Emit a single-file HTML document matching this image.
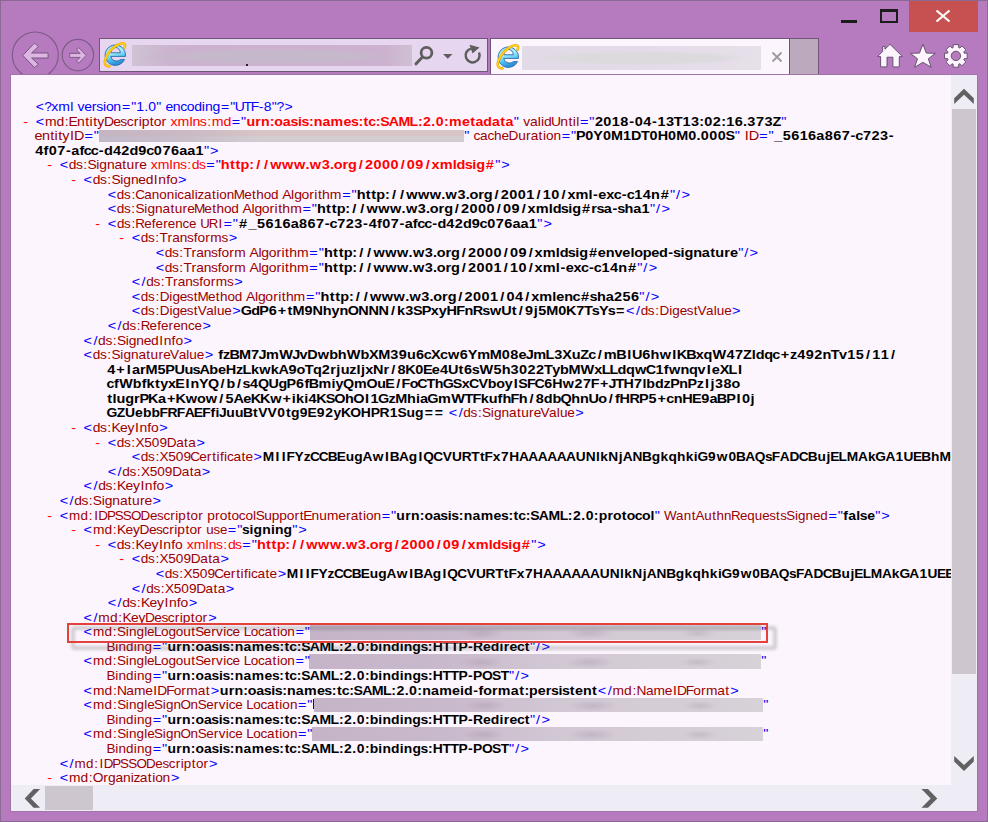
<!DOCTYPE html>
<html><head><meta charset="utf-8">
<style>
html,body{margin:0;padding:0}
body{width:988px;height:822px;position:relative;overflow:hidden;background:#b57bbe;font-family:"Liberation Sans",sans-serif}
.abs{position:absolute}
#win{position:absolute;left:0;top:0;width:986px;height:820px;border:1px solid #8a6a92}
#content{position:absolute;left:11px;top:75px;width:966px;height:736px;background:#fcf5fd;overflow:hidden}
#txt{position:absolute;left:-11px;top:-75px;width:988px;height:822px}
#txt span{position:absolute;white-space:pre;font-family:"Liberation Sans",sans-serif;font-size:12.6px;line-height:15px;font-kerning:none;transform-origin:0 0}
.blur{position:absolute;background:#d8d0d8}
</style></head><body>
<div id="win"></div>
<!-- title buttons -->
<div class="abs" style="left:841px;top:20px;width:16px;height:3px;background:#1c1c1c"></div>
<div class="abs" style="left:880px;top:9px;width:14px;height:9px;border:2px solid #1c1c1c;border-top-width:3px"></div>
<div class="abs" style="left:909px;top:1px;width:69px;height:31px;background:#c75050"></div>
<svg class="abs" style="left:909px;top:1px" width="69" height="31" viewBox="0 0 69 31"><path d="M27.5 9.5 L40.5 20.5 M40.5 9.5 L27.5 20.5" stroke="#fff" stroke-width="2.2" fill="none"/></svg>
<!-- nav buttons -->
<svg class="abs" style="left:0;top:0" width="100" height="75" viewBox="0 0 100 75">
 <circle cx="35.3" cy="55" r="23" fill="none" stroke="#7d5a87" stroke-width="1.1"/>
 <path d="M22.8 55.4 L34.5 43.1 L38.4 46.5 L31.6 53 L48.1 53 L48.1 58 L31.6 58 L38.4 64.3 L34.5 67.6 Z" fill="#ddb6e3" stroke="#6e4f79" stroke-width="0.9" stroke-linejoin="miter"/>
 <circle cx="77.9" cy="55.1" r="15.7" fill="none" stroke="#7d5a87" stroke-width="1.1"/>
 <path d="M86.1 55.4 L78.7 47.7 L76.7 49.9 L80.2 53.4 L69.7 53.4 L69.7 57.4 L80.2 57.4 L76.7 60.9 L78.7 63.2 Z" fill="#ddb6e3" stroke="#6e4f79" stroke-width="0.8"/>
</svg>
<!-- address bar -->
<div class="abs" style="left:99px;top:38px;width:387px;height:32px;border:1px solid #6f5578;background:#e7d6ef"></div>
<div class="blur" style="left:132px;top:45px;width:280px;height:21px;background:radial-gradient(ellipse 48% 42% at 50% 55%,#c6b8cb 60%,rgba(200,180,205,0) 100%),linear-gradient(90deg,#cfc3d3 0%,#cbb2cf 15%,#cdb0d0 50%,#cdb1d0 90%,#cfc0d3 100%)"></div>
<div class="abs" style="left:246px;top:64px;width:2px;height:2px;background:#222"></div>
<svg class="abs" style="left:410px;top:40px" width="80" height="30" viewBox="410 40 80 30">
 <circle cx="426.5" cy="52.8" r="5.4" fill="none" stroke="#5e5e5e" stroke-width="2.8"/>
 <path d="M422.5 57 L416 63.8" stroke="#5e5e5e" stroke-width="3" stroke-linecap="round"/>
 <path d="M443 54 L452.5 54 L447.75 58.8 Z" fill="#5e5e5e"/>
 <path d="M479 52.5 A7 7 0 1 1 471 48.6" fill="none" stroke="#5e5e5e" stroke-width="2.5"/>
 <path d="M469.5 44.8 L479.5 47.6 L472.5 53.5 Z" fill="#5e5e5e"/>
</svg>
<!-- tab -->
<div class="abs" style="left:490px;top:38px;width:298px;height:35px;border:1px solid #6f5578;border-bottom:none;background:#fcf5fd"></div>
<div class="blur" style="left:522px;top:46px;width:239px;height:24px;background:radial-gradient(ellipse 45% 30% at 50% 50%,#dcdadd 70%,rgba(220,218,221,0) 100%),linear-gradient(90deg,#e2dae6,#e4dbe8 50%,#e6e0ea)"></div>
<svg class="abs" style="left:770px;top:50px" width="14" height="14" viewBox="0 0 14 14"><path d="M2.5 2.5 L11.5 11.5 M11.5 2.5 L2.5 11.5" stroke="#9a9a9a" stroke-width="1.8"/></svg>
<div class="abs" style="left:789px;top:38px;width:28px;height:35px;border:1px solid #6f5578;border-bottom:none;background:#bca9bd"></div>
<!-- IE icons -->
<svg class="abs" style="left:100px;top:40px" width="30" height="30" viewBox="100 40 30 30">
 <defs>
  <linearGradient id="ieg" x1="0" y1="0" x2="0.3" y2="1"><stop offset="0" stop-color="#8fe3fb"/><stop offset="0.45" stop-color="#a9effd"/><stop offset="0.75" stop-color="#4cc3ef"/><stop offset="1" stop-color="#2c8fd6"/></linearGradient>
  
 </defs>
 
   <path d="M125.43 56.4 L110.7 56.4 Q111.3 60.6 115.9 61.1 Q118.4 61.3 120.6 59.6 L124.5 59.6 A10.2 10.2 0 1 1 125.43 56.4 Z M110.9 52.8 A4.7 5.3 0 0 1 120.3 52.8 Z" fill="url(#ieg)" fill-rule="evenodd" stroke="#2a66ad" stroke-width="0.9"/>
   <path d="M109.5 66.3 C105.5 66.8, 103.8 63.5, 105.3 59.5 C107 54.5, 111.5 48.5, 117 45.2 C120.5 43.2, 124 42.5, 124.8 44.2 C125.3 45.2, 125 46.5, 124.6 47.6" fill="none" stroke="#eaa300" stroke-width="2.6" stroke-linecap="round"/>
   <path d="M109.5 66.3 C105.5 66.8, 103.8 63.5, 105.3 59.5 C107 54.5, 111.5 48.5, 117 45.2 C120.5 43.2, 124 42.5, 124.8 44.2 C125.3 45.2, 125 46.5, 124.6 47.6" fill="none" stroke="#ffd51c" stroke-width="1.4" stroke-linecap="round"/>
  
</svg>
<svg class="abs" style="left:493px;top:42px" width="30" height="30" viewBox="100 40 30 30">
 
   <path d="M125.43 56.4 L110.7 56.4 Q111.3 60.6 115.9 61.1 Q118.4 61.3 120.6 59.6 L124.5 59.6 A10.2 10.2 0 1 1 125.43 56.4 Z M110.9 52.8 A4.7 5.3 0 0 1 120.3 52.8 Z" fill="url(#ieg)" fill-rule="evenodd" stroke="#2a66ad" stroke-width="0.9"/>
   <path d="M109.5 66.3 C105.5 66.8, 103.8 63.5, 105.3 59.5 C107 54.5, 111.5 48.5, 117 45.2 C120.5 43.2, 124 42.5, 124.8 44.2 C125.3 45.2, 125 46.5, 124.6 47.6" fill="none" stroke="#eaa300" stroke-width="2.6" stroke-linecap="round"/>
   <path d="M109.5 66.3 C105.5 66.8, 103.8 63.5, 105.3 59.5 C107 54.5, 111.5 48.5, 117 45.2 C120.5 43.2, 124 42.5, 124.8 44.2 C125.3 45.2, 125 46.5, 124.6 47.6" fill="none" stroke="#ffd51c" stroke-width="1.4" stroke-linecap="round"/>
  
</svg>
<!-- right toolbar icons -->
<svg class="abs" style="left:870px;top:40px" width="110" height="32" viewBox="870 40 110 32">
 <path d="M890 44.3 L902.4 56.6 L899.3 56.6 L899.3 66.9 L892.9 66.9 L892.9 57.2 L887 57.2 L887 66.9 L880.6 66.9 L880.6 56.6 L877.5 56.6 L882.6 51.5 L882.6 46.4 L884.9 46.4 L884.9 49.3 Z" fill="#fcf5fd" stroke="#5e4868" stroke-width="0.9"/>
 <path d="M922.9 44.2 L926.3 53.1 L935.4 53.3 L928.3 58.8 L931.2 67.3 L922.9 62.3 L914.6 67.3 L917.5 58.8 L910.4 53.3 L919.5 53.1 Z" fill="#fcf5fd" stroke="#5e4868" stroke-width="0.9"/>
 <g transform="translate(955.9,55.9)"><path d="M8.04 -3.33 L8.25 -2.75 L11.27 -2.75 L11.27 2.75 L8.25 2.75 L8.04 3.33 L7.78 3.89 L9.91 6.02 L6.02 9.91 L3.89 7.78 L3.33 8.04 L2.75 8.25 L2.75 11.27 L-2.75 11.27 L-2.75 8.25 L-3.33 8.04 L-3.89 7.78 L-6.02 9.91 L-9.91 6.02 L-7.78 3.89 L-8.04 3.33 L-8.25 2.75 L-11.27 2.75 L-11.27 -2.75 L-8.25 -2.75 L-8.04 -3.33 L-7.78 -3.89 L-9.91 -6.02 L-6.02 -9.91 L-3.89 -7.78 L-3.33 -8.04 L-2.75 -8.25 L-2.75 -11.27 L2.75 -11.27 L2.75 -8.25 L3.33 -8.04 L3.89 -7.78 L6.02 -9.91 L9.91 -6.02 L7.78 -3.89 Z M4.70 0 A4.7 4.7 0 1 0 -4.70 0 A4.7 4.7 0 1 0 4.70 0 Z" fill-rule="evenodd" fill="#fcf5fd" stroke="#5e4868" stroke-width="0.9"/></g>
</svg>
<!-- content -->
<div class="abs" style="left:10px;top:74px;width:968px;height:738px;background:#a272aa"></div>
<div id="content"><div id="txt">
<div class="blur" style="left:99px;top:130px;width:365px;height:12px;background:linear-gradient(90deg,rgba(175,160,190,.45) 0%,rgba(180,165,190,.35) 25%,rgba(200,195,200,0) 45%),linear-gradient(180deg,#d8c6c9 0%,#d7c4c6 45%,#d4cdd2 60%,#d2ccd1 100%)"></div>
<div class="blur" style="left:310px;top:625px;width:451px;height:15px;background:radial-gradient(ellipse 22px 6px at 38% 55%,rgba(150,130,150,.28),transparent),radial-gradient(ellipse 25px 6px at 62% 55%,rgba(150,130,155,.28),transparent),radial-gradient(ellipse 18px 5px at 86% 55%,rgba(150,130,150,.25),transparent),linear-gradient(90deg,#c5b4c8 0%,#c9b9cc 30%,#d2c8d4 55%,#d7d1d8 100%)"></div>
<div class="blur" style="left:309px;top:654px;width:452px;height:15px;background:radial-gradient(ellipse 22px 6px at 38% 55%,rgba(150,130,150,.28),transparent),radial-gradient(ellipse 25px 6px at 62% 55%,rgba(150,130,155,.28),transparent),radial-gradient(ellipse 18px 5px at 86% 55%,rgba(150,130,150,.25),transparent),linear-gradient(90deg,#c5b4c8 0%,#c9b9cc 30%,#d2c8d4 55%,#d7d1d8 100%)"></div>
<div class="blur" style="left:314px;top:698px;width:449px;height:14px;background:radial-gradient(ellipse 22px 6px at 38% 55%,rgba(150,130,150,.28),transparent),radial-gradient(ellipse 25px 6px at 62% 55%,rgba(150,130,155,.28),transparent),radial-gradient(ellipse 18px 5px at 86% 55%,rgba(150,130,150,.25),transparent),linear-gradient(90deg,#c5b4c8 0%,#c9b9cc 30%,#d2c8d4 55%,#d7d1d8 100%)"></div>
<div class="blur" style="left:312px;top:727px;width:451px;height:14px;background:radial-gradient(ellipse 22px 6px at 38% 55%,rgba(150,130,150,.28),transparent),radial-gradient(ellipse 25px 6px at 62% 55%,rgba(150,130,155,.28),transparent),radial-gradient(ellipse 18px 5px at 86% 55%,rgba(150,130,150,.25),transparent),linear-gradient(90deg,#c5b4c8 0%,#c9b9cc 30%,#d2c8d4 55%,#d7d1d8 100%)"></div>
<div class="abs" style="left:313px;top:699px;width:1px;height:10px;background:#1a1a1a"></div>
<svg class="abs" style="left:0;top:0" width="988" height="822" viewBox="0 0 988 822" font-family="Liberation Sans" font-size="12.6" text-anchor="middle">
<text x="36.0 43.3 49.4 57.8 64.6 73.0 79.3 84.8 89.9 94.2 98.9 105.6 113.5 120.4 126.3 131.7 137.1 143.0 152.5 159.2 165.5 171.7 178.4 183.2 188.1 194.9 202.8 209.7 216.1 223.3 229.7 235.3 241.2 247.1 252.5 259.9" y="111" fill="#0000ff" transform="scale(1.1101,1)">&lt;?xmlversion=&quot;1.0&quot;encoding=&quot;UTF-8&quot;?&gt;</text>
<text x="22.4" y="126" fill="#ff0000" transform="scale(1.1500,1)">-</text>
<text x="34.7" y="126" fill="#0000ff" transform="scale(1.1500,1)">&lt;</text>
<text x="45.8 54.5 60.3 66.2 73.1 78.7 82.3 85.9 91.1 98.5 105.9 111.9 117.6 122.9 126.7 131.5 137.1 142.5 148.1" y="126" fill="#990000" transform="scale(1.1068,1)">md:EntityDescriptor</text>
<text x="154.6 162.9 169.6 174.4 180.5 185.7 193.3 201.9" y="126" fill="#ff0000" transform="scale(1.1261,1)">xmlns:md</text>
<text x="205.2 211.9" y="126" fill="#0000ff" transform="scale(1.1500,1)">=&quot;</text>
<text x="222.7 229.2 235.6 241.7 247.5 254.7 261.4 266.3 271.2 276.4 282.4 289.9 299.2 308.6 315.1 320.4 325.0 330.6 335.8 341.8 349.8 359.1 367.6 373.2 379.2 384.8 390.4 396.3 404.3 413.7 419.6 425.7 433.0 440.4 446.4 452.5" y="126" fill="#ff0000" font-weight="bold" transform="scale(1.1261,1)">urn:oasis:names:tc:SAML:2.0:metadata</text>
<text x="449.0" y="126" fill="#0000ff" transform="scale(1.1500,1)">&quot;</text>
<text x="477.4 483.9 488.7 491.7 496.6 504.0 511.4 517.0 520.6 523.6" y="126" fill="#990000" transform="scale(1.1033,1)">validUntil</text>
<text x="508.0 514.7" y="126" fill="#0000ff" transform="scale(1.1500,1)">=&quot;</text>
<text x="520.8 528.1 535.5 542.9 549.2 555.4 562.8 569.0 575.3 582.7 589.8 597.0 604.4 610.2 616.0 623.4 629.2 635.0 642.4 647.9 653.4 660.8 668.2 675.5" y="126" fill="#000000" font-weight="bold" transform="scale(1.1500,1)">2018-04-13T13:02:16.373Z</text>
<text x="681.5" y="126" fill="#0000ff" transform="scale(1.1500,1)">&quot;</text>
<text x="33.8 40.3 45.7 49.2 52.7 57.8 63.1 69.3" y="140" fill="#990000" transform="scale(1.1411,1)">entityID</text>
<text x="77.1 83.7" y="140" fill="#0000ff" transform="scale(1.1500,1)">=&quot;</text>
<text x="405.9" y="140" fill="#0000ff" transform="scale(1.1500,1)">&quot;</text>
<text x="441.5 447.9 454.3 460.8 467.7 475.3 483.1 489.0 494.7 500.3 504.0 508.9 515.8" y="140" fill="#990000" transform="scale(1.0804,1)">cacheDuration</text>
<text x="492.1 498.8" y="140" fill="#0000ff" transform="scale(1.1500,1)">=&quot;</text>
<text x="508.7 516.2 523.9 531.6 540.4 549.2 557.3 565.2 572.4 580.6 588.7 597.5 606.3 611.8 617.3 624.8 632.2 639.7" y="140" fill="#000000" font-weight="bold" transform="scale(1.1417,1)">P0Y0M1DT0H0M0.000S</text>
<text x="641.2" y="140" fill="#0000ff" transform="scale(1.1500,1)">&quot;</text>
<text x="649.4 655.7" y="140" fill="#990000" transform="scale(1.1500,1)">ID</text>
<text x="663.9 670.6" y="140" fill="#0000ff" transform="scale(1.1500,1)">=&quot;</text>
<text x="676.7 684.1 691.5 698.9 706.2 713.4 720.6 728.0 735.4 741.7 747.3 754.0 761.4 768.8 775.0" y="140" fill="#000000" font-weight="bold" transform="scale(1.1500,1)">_5616a867-c723-</text>
<text x="34.1 40.0 45.8 53.2 59.5 65.5 71.2 76.4 82.4 88.0 94.3 101.7 109.0 116.4 123.8 130.6 137.3 144.7 152.1 159.3 166.3 173.5" y="155" fill="#000000" font-weight="bold" transform="scale(1.1500,1)">4f07-afcc-d42d9c076aa1</text>
<text x="179.6 186.2" y="155" fill="#0000ff" transform="scale(1.1500,1)">&quot;&gt;</text>
<text x="43.2" y="169" fill="#ff0000" transform="scale(1.1500,1)">-</text>
<text x="55.6" y="169" fill="#0000ff" transform="scale(1.1500,1)">&lt;</text>
<text x="66.0 72.3 77.6 83.8 89.0 93.9 100.8 107.6 113.1 118.7 124.5 130.1" y="169" fill="#990000" transform="scale(1.0991,1)">ds:Signature</text>
<text x="138.8 147.1 153.9 158.8 165.0 170.2 176.1 182.2" y="169" fill="#ff0000" transform="scale(1.1117,1)">xmlns:ds</text>
<text x="183.1 189.8" y="169" fill="#0000ff" transform="scale(1.1500,1)">=&quot;</text>
<text x="195.9 202.1 206.9 213.0 218.9 224.5 231.4 240.0 250.2 260.5 267.4 274.3 283.2 288.7 294.1 300.2 306.5 313.7 320.8 328.2 335.6 343.0 350.2 357.3 364.7 371.9 378.8 387.9 395.4 400.9 407.6 412.4 417.9 426.0" y="169" fill="#ff0000" font-weight="bold" transform="scale(1.1500,1)">http://www.w3.org/2000/09/xmldsig#</text>
<text x="432.8 439.5" y="169" fill="#0000ff" transform="scale(1.1500,1)">&quot;&gt;</text>
<text x="64.1" y="184" fill="#ff0000" transform="scale(1.1500,1)">-</text>
<text x="76.4" y="184" fill="#0000ff" transform="scale(1.1500,1)">&lt;</text>
<text x="88.0 94.2 99.5 105.8 111.0 115.9 122.8 129.5 136.2 141.9 147.7 153.1 158.3" y="184" fill="#990000" transform="scale(1.0977,1)">ds:SignedInfo</text>
<text x="158.5" y="184" fill="#0000ff" transform="scale(1.1500,1)">&gt;</text>
<text x="97.3" y="199" fill="#0000ff" transform="scale(1.1500,1)">&lt;</text>
<text x="112.7 119.1 124.6 131.0 138.4 145.4 152.3 159.3 164.4 168.9 175.4 180.4 183.4 187.8 194.2 199.8 203.5 208.4 215.4 223.7 231.7 237.3 243.0 250.0 256.9" y="199" fill="#990000" transform="scale(1.0699,1)">ds:CanonicalizationMethod</text>
<text x="258.7 263.9 268.8 275.4 281.0 284.8 288.4 293.9 302.7" y="199" fill="#990000" transform="scale(1.1090,1)">Algorithm</text>
<text x="301.2 307.9" y="199" fill="#0000ff" transform="scale(1.1500,1)">=&quot;</text>
<text x="314.0 320.2 325.0 331.1 337.0 342.6 349.5 358.1 368.3 378.6 385.5 392.4 401.3 406.8 412.2 418.3 424.6 431.8 438.9 446.3 453.7 461.1 468.3 475.4 482.8 490.0 496.9 506.0 513.5 517.8 523.8 530.7 537.2 542.8 548.4 555.1 562.5 569.9 578.1" y="199" fill="#000000" font-weight="bold" transform="scale(1.1500,1)">http://www.w3.org/2001/10/xml-exc-c14n#</text>
<text x="584.9 589.7 596.3" y="199" fill="#0000ff" transform="scale(1.1500,1)">&quot;/&gt;</text>
<text x="97.3" y="213" fill="#0000ff" transform="scale(1.1500,1)">&lt;</text>
<text x="111.3 117.7 123.0 129.3 134.6 139.6 146.6 153.5 159.1 164.8 170.7 176.3 184.3 192.2 197.7 203.4 210.3 217.1" y="213" fill="#990000" transform="scale(1.0831,1)">ds:SignatureMethod</text>
<text x="222.9 228.1 233.0 239.6 245.2 249.0 252.6 258.1 266.9" y="213" fill="#990000" transform="scale(1.1090,1)">Algorithm</text>
<text x="266.7 273.4" y="213" fill="#0000ff" transform="scale(1.1500,1)">=&quot;</text>
<text x="279.5 285.7 290.5 296.6 302.4 308.0 315.0 323.6 333.8 344.1 351.0 357.9 366.7 372.2 377.6 383.8 390.1 397.3 404.4 411.8 419.2 426.6 433.7 440.9 448.3 455.4 462.3 471.5 479.0 484.5 491.2 496.0 501.5 509.6 516.5 522.1 528.6 534.7 540.2 547.0 554.2 561.4" y="213" fill="#000000" font-weight="bold" transform="scale(1.1500,1)">http://www.w3.org/2000/09/xmldsig#rsa-sha1</text>
<text x="567.5 572.3 578.9" y="213" fill="#0000ff" transform="scale(1.1500,1)">&quot;/&gt;</text>
<text x="85.0" y="228" fill="#ff0000" transform="scale(1.1500,1)">-</text>
<text x="97.3" y="228" fill="#0000ff" transform="scale(1.1500,1)">&lt;</text>
<text x="113.6 120.0 125.5 132.0 139.3 144.6 150.0 155.8 161.5 168.5 175.1 181.6" y="228" fill="#990000" transform="scale(1.0618,1)">ds:Reference</text>
<text x="195.4 203.6 210.0" y="228" fill="#990000" transform="scale(1.0489,1)">URI</text>
<text x="198.0 204.7" y="228" fill="#0000ff" transform="scale(1.1500,1)">=&quot;</text>
<text x="211.4 219.5 226.9 234.3 241.7 249.1 256.3 263.5 270.9 278.3 284.5 290.1 296.8 304.2 311.6 317.8 324.1 329.9 335.8 343.2 349.4 355.5 361.1 366.3 372.4 378.0 384.2 391.6 399.0 406.4 413.8 420.5 427.3 434.6 442.0 449.2 456.2 463.4" y="228" fill="#000000" font-weight="bold" transform="scale(1.1500,1)">#_5616a867-c723-4f07-afcc-d42d9c076aa1</text>
<text x="469.5 476.2" y="228" fill="#0000ff" transform="scale(1.1500,1)">&quot;&gt;</text>
<text x="105.8" y="242" fill="#ff0000" transform="scale(1.1500,1)">-</text>
<text x="118.2" y="242" fill="#0000ff" transform="scale(1.1500,1)">&lt;</text>
<text x="133.4 139.7 145.1 151.0 156.7 162.5 169.4 175.7 180.5 185.8 191.5 199.3 207.6" y="242" fill="#990000" transform="scale(1.0837,1)">ds:Transforms</text>
<text x="202.6" y="242" fill="#0000ff" transform="scale(1.1500,1)">&gt;</text>
<text x="139.1" y="257" fill="#0000ff" transform="scale(1.1500,1)">&lt;</text>
<text x="154.4 160.6 166.0 171.8 177.5 183.2 190.0 196.4 201.1 206.4 212.0 219.7" y="257" fill="#990000" transform="scale(1.0921,1)">ds:Transform</text>
<text x="229.2 234.4 239.2 245.9 251.5 255.2 258.8 264.4 273.1" y="257" fill="#990000" transform="scale(1.1090,1)">Algorithm</text>
<text x="272.7 279.4" y="257" fill="#0000ff" transform="scale(1.1500,1)">=&quot;</text>
<text x="285.6 291.7 296.6 302.7 308.5 314.1 321.0 329.6 339.8 350.1 357.0 364.0 372.8 378.3 383.7 389.8 396.1 403.3 410.4 417.8 425.2 432.6 439.8 446.9 454.3 461.5 468.4 477.5 485.0 490.5 497.2 502.0 507.5 515.6 523.4 530.7 537.9 544.7 550.0 555.4 562.7 569.8 577.0 583.2 588.8 593.6 599.1 606.6 613.8 619.7 625.9 632.3 638.3" y="257" fill="#000000" font-weight="bold" transform="scale(1.1500,1)">http://www.w3.org/2000/09/xmldsig#enveloped-signature</text>
<text x="644.1 648.9 655.5" y="257" fill="#0000ff" transform="scale(1.1500,1)">&quot;/&gt;</text>
<text x="139.1" y="272" fill="#0000ff" transform="scale(1.1500,1)">&lt;</text>
<text x="154.4 160.6 166.0 171.8 177.5 183.2 190.0 196.4 201.1 206.4 212.0 219.7" y="272" fill="#990000" transform="scale(1.0921,1)">ds:Transform</text>
<text x="229.2 234.4 239.2 245.9 251.5 255.2 258.8 264.4 273.1" y="272" fill="#990000" transform="scale(1.1090,1)">Algorithm</text>
<text x="272.7 279.4" y="272" fill="#0000ff" transform="scale(1.1500,1)">=&quot;</text>
<text x="285.6 291.7 296.6 302.7 308.5 314.1 321.0 329.6 339.8 350.1 357.0 364.0 372.8 378.3 383.7 389.8 396.1 403.3 410.4 417.8 425.2 432.6 439.8 446.9 454.3 461.5 468.4 477.5 485.0 489.4 495.4 502.2 508.7 514.3 519.9 526.6 534.0 541.5 549.6" y="272" fill="#000000" font-weight="bold" transform="scale(1.1500,1)">http://www.w3.org/2001/10/xml-exc-c14n#</text>
<text x="556.4 561.2 567.8" y="272" fill="#0000ff" transform="scale(1.1500,1)">&quot;/&gt;</text>
<text x="118.2 124.8" y="286" fill="#0000ff" transform="scale(1.1500,1)">&lt;/</text>
<text x="138.4 144.8 150.1 156.0 161.7 167.5 174.4 180.8 185.6 190.9 196.6 204.3 212.6" y="286" fill="#990000" transform="scale(1.0837,1)">ds:Transforms</text>
<text x="207.3" y="286" fill="#0000ff" transform="scale(1.1500,1)">&gt;</text>
<text x="118.2" y="301" fill="#0000ff" transform="scale(1.1500,1)">&lt;</text>
<text x="134.5 140.9 146.3 153.1 158.9 163.9 170.8 177.0 182.0 188.9 197.0 202.5 208.2 215.1 222.0" y="301" fill="#990000" transform="scale(1.0750,1)">ds:DigestMethod</text>
<text x="226.1 231.3 236.1 242.8 248.4 252.2 255.8 261.3 270.0" y="301" fill="#990000" transform="scale(1.1090,1)">Algorithm</text>
<text x="269.8 276.4" y="301" fill="#0000ff" transform="scale(1.1500,1)">=&quot;</text>
<text x="282.6 288.8 293.6 299.7 305.5 311.1 318.0 326.6 336.9 347.1 354.1 361.0 369.8 375.3 380.7 386.9 393.2 400.3 407.5 414.9 422.3 429.6 436.8 444.0 451.3 458.5 465.4 474.5 482.0 487.3 494.5 501.3 508.7 516.1 522.9 530.2 537.4 544.8 552.1" y="301" fill="#000000" font-weight="bold" transform="scale(1.1500,1)">http://www.w3.org/2001/04/xmlenc#sha256</text>
<text x="558.2 563.0 569.6" y="301" fill="#0000ff" transform="scale(1.1500,1)">&quot;/&gt;</text>
<text x="118.2" y="315" fill="#0000ff" transform="scale(1.1500,1)">&lt;</text>
<text x="134.8 141.2 146.7 153.5 159.4 164.4 171.2 177.4 182.5 188.6 195.8 200.8 205.8 212.7" y="315" fill="#990000" transform="scale(1.0722,1)">ds:DigestValue</text>
<text x="205.7" y="315" fill="#0000ff" transform="scale(1.1500,1)">&gt;</text>
<text x="214.7 222.7 230.2 237.7 245.8 252.7 260.1 268.8 277.0 285.2 292.4 299.6 307.9 316.8 325.6 334.5 342.4 349.4 356.7 364.1 371.7 378.9 385.8 393.7 401.5 408.6 416.6 423.8 431.9 441.3 448.0 453.9 461.1 466.8 472.6 481.3 490.0 497.8 505.6 512.8 519.3 526.2 533.2 540.6" y="315" fill="#000000" font-weight="bold" transform="scale(1.1475,1)">GdP6+tM9NhynONNN/k3SPxyHFnRswUt/9j5M0K7TsYs=</text>
<text x="548.1 554.7" y="315" fill="#0000ff" transform="scale(1.1500,1)">&lt;/</text>
<text x="601.0 607.4 612.9 619.7 625.5 630.6 637.4 643.6 648.7 654.7 662.0 667.0 672.0 678.9" y="315" fill="#990000" transform="scale(1.0722,1)">ds:DigestValue</text>
<text x="640.3" y="315" fill="#0000ff" transform="scale(1.1500,1)">&gt;</text>
<text x="97.3 104.0" y="330" fill="#0000ff" transform="scale(1.1500,1)">&lt;/</text>
<text x="118.7 125.2 130.6 137.1 144.4 149.8 155.1 160.9 166.7 173.6 180.3 186.7" y="330" fill="#990000" transform="scale(1.0618,1)">ds:Reference</text>
<text x="179.8" y="330" fill="#0000ff" transform="scale(1.1500,1)">&gt;</text>
<text x="76.4 83.1" y="345" fill="#0000ff" transform="scale(1.1500,1)">&lt;/</text>
<text x="92.9 99.2 104.5 110.7 115.9 120.8 127.7 134.5 141.1 146.9 152.6 158.0 163.3" y="345" fill="#990000" transform="scale(1.0977,1)">ds:SignedInfo</text>
<text x="163.2" y="345" fill="#0000ff" transform="scale(1.1500,1)">&gt;</text>
<text x="76.4" y="359" fill="#0000ff" transform="scale(1.1500,1)">&lt;</text>
<text x="89.3 95.6 101.0 107.3 112.6 117.6 124.6 131.5 137.1 142.8 148.7 154.4 161.5 168.7 173.6 178.6 185.4" y="359" fill="#990000" transform="scale(1.0814,1)">ds:SignatureValue</text>
<text x="181.8" y="359" fill="#0000ff" transform="scale(1.1500,1)">&gt;</text>
<text x="191.9 197.1 204.1 213.1 221.8 228.3 236.9 248.7 257.7 264.0 271.8 281.3 290.1 297.6 307.5 317.3 325.1 334.2 342.9 350.3 357.8 365.3 372.0 379.1 386.2 394.4 403.2 410.9 420.5 431.2 439.9 447.3 454.4 460.7 469.3 478.3 485.4 493.2 501.1 508.4 515.1 521.6 530.7 540.4 547.1 554.1 562.1 569.6 578.5 586.3 593.1 601.2 608.6 615.7 625.5 635.3 642.7 650.0 655.4 661.0 668.4 675.1 682.5 690.0 696.8 704.1 711.5 719.0 726.2 733.1 740.2 747.6 754.8 762.0 769.3 776.5" y="359" fill="#000000" font-weight="bold" transform="scale(1.1500,1)">fzBM7JmWJvDwbhWbXM39u6cXcw6YmM08eJmL3XuZc/mBIU6hwIKBxqW47Zldqc+z492nTv15/11/</text>
<text x="96.7 104.8 111.9 118.2 124.3 131.8 140.5 148.0 156.2 164.2 171.0 178.1 185.9 193.0 200.9 208.3 214.7 221.7 230.3 239.0 246.7 254.4 261.7 268.8 276.0 283.3 289.6 294.2 300.1 306.9 311.8 315.6 321.1 328.9 335.9 342.0 349.1 356.9 364.7 372.0 379.0 386.2 394.2 400.9 407.0 413.7 422.8 432.6 440.1 447.5 454.9 462.3 469.7 476.8 483.7 490.9 499.6 510.7 520.3 527.1 533.8 540.8 548.2 557.1 566.0 573.5 579.3 586.6 595.5 603.0 610.1 616.3 622.4 630.0 637.4 643.5" y="374" fill="#000000" font-weight="bold" transform="scale(1.1500,1)">4+IarM5PUusAbeHzLkwkA9oTq2rjuzljxNr/8K0Ee4Ut6sW5h3022TybMWxLLdqwC1fwnqvIeXLI</text>
<text x="97.4 102.7 111.1 121.0 127.0 132.7 138.8 144.7 151.7 158.8 165.2 171.8 179.6 188.2 196.2 203.5 210.7 217.3 224.0 232.3 241.2 249.3 256.9 264.5 270.5 276.7 286.5 294.1 299.4 307.4 317.7 328.0 336.4 343.9 351.0 357.9 365.0 372.5 379.8 387.2 395.3 403.4 410.7 418.0 426.0 433.9 441.3 448.5 454.7 461.2 468.4 475.7 483.3 491.5 501.1 510.1 517.6 524.7 532.6 540.0 546.4 554.3 562.5 568.1 573.7 581.2 588.1 595.0 602.7 610.4 617.4 623.3 628.1 633.9 641.4 648.8" y="388" fill="#000000" font-weight="bold" transform="scale(1.1343,1)">cfWbfktyxEInYQ/b/s4QUgP6fBmiyQmOuE/FoCThGSxCVboyISFC6Hw27F+JTH7lbdzPnPzIj38o</text>
<text x="95.5 99.7 105.3 112.8 119.1 125.5 133.4 140.9 148.9 157.3 166.6 175.3 184.0 192.6 199.8 207.6 215.1 222.6 230.8 240.0 249.5 255.7 261.1 266.5 272.0 279.7 287.6 295.8 304.0 312.2 319.4 325.8 333.8 341.1 349.2 358.0 363.6 368.9 376.7 386.6 398.5 408.0 414.9 421.8 429.1 435.0 441.0 448.1 455.2 462.5 469.6 477.0 484.5 492.6 500.9 508.4 516.5 524.4 531.4 537.1 543.6 552.2 560.2 567.7 575.8 583.2 590.1 598.2 606.2 613.6 620.8 628.2 636.0 642.6 649.0 654.7" y="403" fill="#000000" font-weight="bold" transform="scale(1.1494,1)">tlugrPKa+Kwow/5AeKKw+iki4KSOhOI1GzMhiaGmWTFkufhFh/8dbQhnUo/fHRP5+cnHE9aBPI0j</text>
<text x="101.3 109.5 117.8 125.8 133.3 141.0 148.3 156.2 164.0 171.8 179.8 187.1 192.8 197.0 201.8 208.7 216.6 224.6 231.3 238.1 246.6 254.7 261.1 267.4 275.1 282.7 290.3 298.0 305.5 313.3 322.2 331.4 340.0 348.3 356.5 364.2 372.0 379.8 388.3 397.4" y="417" fill="#000000" font-weight="bold" transform="scale(1.1041,1)">GZUebbFRFAEFfiJuuBtVV0tg9E92yKOHPR1Sug==</text>
<text x="393.9 400.6" y="417" fill="#0000ff" transform="scale(1.1500,1)">&lt;/</text>
<text x="431.9 438.3 443.7 450.0 455.3 460.3 467.3 474.2 479.8 485.5 491.4 497.0 504.1 511.3 516.2 521.3 528.1" y="417" fill="#990000" transform="scale(1.0814,1)">ds:SignatureValue</text>
<text x="504.0" y="417" fill="#0000ff" transform="scale(1.1500,1)">&gt;</text>
<text x="64.1" y="432" fill="#ff0000" transform="scale(1.1500,1)">-</text>
<text x="76.4" y="432" fill="#0000ff" transform="scale(1.1500,1)">&lt;</text>
<text x="87.4 93.6 98.9 105.2 112.2 118.5 124.0 129.7 135.1 140.3" y="432" fill="#990000" transform="scale(1.1046,1)">ds:KeyInfo</text>
<text x="142.2" y="432" fill="#0000ff" transform="scale(1.1500,1)">&gt;</text>
<text x="85.0" y="447" fill="#ff0000" transform="scale(1.1500,1)">-</text>
<text x="97.3" y="447" fill="#0000ff" transform="scale(1.1500,1)">&lt;</text>
<text x="111.2 117.6 122.9 129.2 136.5 143.6 150.6 158.4 166.1 171.6 177.2" y="447" fill="#990000" transform="scale(1.0840,1)">ds:X509Data</text>
<text x="174.5" y="447" fill="#0000ff" transform="scale(1.1500,1)">&gt;</text>
<text x="118.2" y="461" fill="#0000ff" transform="scale(1.1500,1)">&lt;</text>
<text x="132.7 139.0 144.4 150.6 157.9 164.9 171.9 179.3 186.4 192.0 196.5 200.2 203.6 207.1 211.5 217.9 223.4 228.9" y="461" fill="#990000" transform="scale(1.0894,1)">ds:X509Certificate</text>
<text x="224.2" y="461" fill="#0000ff" transform="scale(1.1500,1)">&gt;</text>
<text x="246.6 254.7 260.5 266.9 274.6 282.0 289.2 297.3 305.5 313.5 321.3 329.2 337.4 347.2 355.4 362.5 371.0 379.3 386.0 393.6 402.4 410.7 419.6 428.5 436.6 442.8 448.8 456.0 463.6 472.1 481.1 489.7 498.4 507.0 515.7 524.4 533.2 542.4 549.0 554.7 563.1 569.9 576.4 585.4 594.2 602.3 610.0 617.7 625.6 633.3 638.9 645.3 653.7 663.1 672.4 680.5 689.0 698.0 705.9 712.6 720.5 729.5 738.1 746.3 754.5 760.6 766.6 773.9 782.8 792.4 800.5 808.7 817.6 825.8 834.2 842.6 850.6 858.7 868.0 877.3 885.7 894.3 903.9 912.8" y="461" fill="#000000" font-weight="bold" transform="scale(1.0890,1)">MIIFYzCCBEugAwIBAgIQCVURTtFx7HAAAAAAUNlkNjANBgkqhkiG9w0BAQsFADCBujELMAkGA1UEBhMCVVMx</text>
<text x="97.3 104.0" y="476" fill="#0000ff" transform="scale(1.1500,1)">&lt;/</text>
<text x="116.3 122.6 128.0 134.3 141.6 148.6 155.6 163.4 171.1 176.7 182.2" y="476" fill="#990000" transform="scale(1.0840,1)">ds:X509Data</text>
<text x="179.2" y="476" fill="#0000ff" transform="scale(1.1500,1)">&gt;</text>
<text x="76.4 83.1" y="490" fill="#0000ff" transform="scale(1.1500,1)">&lt;/</text>
<text x="92.4 98.6 103.8 110.1 117.1 123.5 128.9 134.6 140.0 145.2" y="490" fill="#990000" transform="scale(1.1046,1)">ds:KeyInfo</text>
<text x="146.9" y="490" fill="#0000ff" transform="scale(1.1500,1)">&gt;</text>
<text x="55.6 62.2" y="505" fill="#0000ff" transform="scale(1.1500,1)">&lt;/</text>
<text x="71.0 77.2 82.5 88.7 94.0 98.9 105.7 112.6 118.1 123.7 129.5 135.0" y="505" fill="#990000" transform="scale(1.0991,1)">ds:Signature</text>
<text x="136.4" y="505" fill="#0000ff" transform="scale(1.1500,1)">&gt;</text>
<text x="43.2" y="520" fill="#ff0000" transform="scale(1.1500,1)">-</text>
<text x="55.6" y="520" fill="#0000ff" transform="scale(1.1500,1)">&lt;</text>
<text x="70.1 79.2 85.2 90.2 96.9 104.6 111.9 119.6 127.9 136.6 144.3 150.6 156.6 162.0 165.9 171.0 176.8 182.4 188.2" y="520" fill="#990000" transform="scale(1.0648,1)">md:IDPSSODescriptor</text>
<text x="194.1 199.9 205.6 211.1 216.6 222.9 229.3 234.1 239.4 246.6 253.6 260.5 267.3 273.0 277.5 283.2 290.2 297.2 306.1 314.8 320.4 326.1 331.7 335.4 340.2 347.1" y="520" fill="#990000" transform="scale(1.0869,1)">protocolSupportEnumeration</text>
<text x="335.6 342.3" y="520" fill="#0000ff" transform="scale(1.1500,1)">=&quot;</text>
<text x="360.4 367.0 373.6 379.7 385.6 392.9 399.6 404.6 409.5 414.8 420.9 428.5 438.0 447.4 454.1 459.4 464.1 469.7 475.0 481.1 489.2 498.6 507.3 512.9 518.9 524.6 530.3 536.3 542.4 548.9 555.2 561.4 567.7 574.5 581.4 587.0" y="520" fill="#000000" font-weight="bold" transform="scale(1.1117,1)">urn:oasis:names:tc:SAML:2.0:protocol</text>
<text x="571.6" y="520" fill="#0000ff" transform="scale(1.1500,1)">&quot;</text>
<text x="632.4 641.4 648.5 654.3 660.4 667.9 673.7 679.5 686.7 694.3 701.6 708.5 715.6 722.6 728.9 734.0 739.2 746.0 751.4 756.5 763.6 770.6 777.5" y="520" fill="#990000" transform="scale(1.0599,1)">WantAuthnRequestsSigned</text>
<text x="724.1 730.8" y="520" fill="#0000ff" transform="scale(1.1500,1)">=&quot;</text>
<text x="759.9 765.7 771.2 776.2 782.8" y="520" fill="#000000" font-weight="bold" transform="scale(1.1128,1)">false</text>
<text x="763.4 770.0" y="520" fill="#0000ff" transform="scale(1.1500,1)">&quot;&gt;</text>
<text x="64.1" y="534" fill="#ff0000" transform="scale(1.1500,1)">-</text>
<text x="76.4" y="534" fill="#0000ff" transform="scale(1.1500,1)">&lt;</text>
<text x="90.4 99.3 105.2 111.5 118.6 125.1 132.5 140.0 146.1 151.9 157.3 161.1 166.1 171.7 177.2 182.8" y="534" fill="#990000" transform="scale(1.0909,1)">md:KeyDescriptor</text>
<text x="198.7 205.2 211.5" y="534" fill="#990000" transform="scale(1.0573,1)">use</text>
<text x="201.8 208.5" y="534" fill="#0000ff" transform="scale(1.1500,1)">=&quot;</text>
<text x="222.2 227.2 232.9 240.7 246.5 252.3 260.0" y="534" fill="#000000" font-weight="bold" transform="scale(1.1069,1)">signing</text>
<text x="256.4 263.0" y="534" fill="#0000ff" transform="scale(1.1500,1)">&quot;&gt;</text>
<text x="85.0" y="549" fill="#ff0000" transform="scale(1.1500,1)">-</text>
<text x="97.3" y="549" fill="#0000ff" transform="scale(1.1500,1)">&lt;</text>
<text x="109.2 115.4 120.6 126.9 133.9 140.3 145.7 151.4 156.8 162.0" y="549" fill="#990000" transform="scale(1.1046,1)">ds:KeyInfo</text>
<text x="171.2 179.5 186.3 191.2 197.4 202.6 208.5 214.6" y="549" fill="#ff0000" transform="scale(1.1117,1)">xmlns:ds</text>
<text x="214.4 221.1" y="549" fill="#0000ff" transform="scale(1.1500,1)">=&quot;</text>
<text x="227.3 233.4 238.3 244.4 250.2 255.8 262.7 271.3 281.5 291.8 298.7 305.7 314.5 320.0 325.4 331.5 337.8 345.0 352.2 359.5 366.9 374.3 381.5 388.6 396.0 403.2 410.1 419.2 426.7 432.2 438.9 443.7 449.2 457.3" y="549" fill="#ff0000" font-weight="bold" transform="scale(1.1500,1)">http://www.w3.org/2000/09/xmldsig#</text>
<text x="464.1 470.8" y="549" fill="#0000ff" transform="scale(1.1500,1)">&quot;&gt;</text>
<text x="105.8" y="563" fill="#ff0000" transform="scale(1.1500,1)">-</text>
<text x="118.2" y="563" fill="#0000ff" transform="scale(1.1500,1)">&lt;</text>
<text x="133.4 139.7 145.1 151.4 158.7 165.7 172.8 180.5 188.2 193.8 199.3" y="563" fill="#990000" transform="scale(1.0840,1)">ds:X509Data</text>
<text x="195.4" y="563" fill="#0000ff" transform="scale(1.1500,1)">&gt;</text>
<text x="139.1" y="578" fill="#0000ff" transform="scale(1.1500,1)">&lt;</text>
<text x="154.8 161.0 166.4 172.7 179.9 186.9 193.9 201.3 208.4 214.0 218.6 222.2 225.7 229.1 233.6 239.9 245.5 250.9" y="578" fill="#990000" transform="scale(1.0894,1)">ds:X509Certificate</text>
<text x="245.1" y="578" fill="#0000ff" transform="scale(1.1500,1)">&gt;</text>
<text x="268.6 276.8 282.5 288.9 296.6 304.0 311.3 319.3 327.5 335.5 343.3 351.2 359.5 369.2 377.5 384.5 393.1 401.3 408.1 415.7 424.4 432.7 441.6 450.5 458.6 464.8 470.9 478.1 485.6 494.1 503.1 511.8 520.4 529.1 537.7 546.4 555.3 564.5 571.0 576.7 585.1 591.9 598.4 607.4 616.3 624.4 632.0 639.7 647.6 655.3 661.0 667.4 675.8 685.1 694.4 702.5 711.0 720.1 728.0 734.7 742.5 751.5 760.1 768.3 776.5 782.7 788.6 796.0 804.8 814.4 822.5 830.8 839.6 847.8 856.3 864.6 872.6 880.8 890.1 899.4 907.7 916.4 926.0 934.9" y="578" fill="#000000" font-weight="bold" transform="scale(1.0890,1)">MIIFYzCCBEugAwIBAgIQCVURTtFx7HAAAAAAUNlkNjANBgkqhkiG9w0BAQsFADCBujELMAkGA1UEBhMCVVMx</text>
<text x="118.2 124.8" y="593" fill="#0000ff" transform="scale(1.1500,1)">&lt;/</text>
<text x="138.4 144.7 150.1 156.4 163.7 170.7 177.8 185.6 193.2 198.8 204.4" y="593" fill="#990000" transform="scale(1.0840,1)">ds:X509Data</text>
<text x="200.1" y="593" fill="#0000ff" transform="scale(1.1500,1)">&gt;</text>
<text x="97.3 104.0" y="607" fill="#0000ff" transform="scale(1.1500,1)">&lt;/</text>
<text x="114.1 120.3 125.6 131.8 138.8 145.2 150.6 156.4 161.7 166.9" y="607" fill="#990000" transform="scale(1.1046,1)">ds:KeyInfo</text>
<text x="167.8" y="607" fill="#0000ff" transform="scale(1.1500,1)">&gt;</text>
<text x="76.4 83.1" y="622" fill="#0000ff" transform="scale(1.1500,1)">&lt;/</text>
<text x="95.4 104.3 110.2 116.5 123.6 130.1 137.5 145.0 151.1 156.9 162.3 166.1 171.0 176.7 182.2 187.8" y="622" fill="#990000" transform="scale(1.0909,1)">md:KeyDescriptor</text>
<text x="184.7" y="622" fill="#0000ff" transform="scale(1.1500,1)">&gt;</text>
<text x="76.4" y="636" fill="#0000ff" transform="scale(1.1500,1)">&lt;</text>
<text x="91.6 100.5 106.5 112.8 118.2 123.2 130.2 135.2 140.0 146.5 153.0 159.8 166.7 173.6 179.3 185.3 192.4 198.1 203.7 208.5 213.0 219.3" y="636" fill="#990000" transform="scale(1.0776,1)">md:SingleLogoutService</text>
<text x="230.4 236.9 243.3 249.7 255.4 259.1 264.0 270.9" y="636" fill="#990000" transform="scale(1.0745,1)">Location</text>
<text x="260.7 267.3" y="636" fill="#0000ff" transform="scale(1.1500,1)">=&quot;</text>
<text x="664.1" y="636" fill="#0000ff" transform="scale(1.1500,1)">&quot;</text>
<text x="103.7 109.1 114.1 121.2 126.2 131.3 138.4" y="651" fill="#990000" transform="scale(1.0714,1)">Binding</text>
<text x="136.5 143.1" y="651" fill="#0000ff" transform="scale(1.1500,1)">=&quot;</text>
<text x="154.4 161.0 167.6 173.7 179.6 186.9 193.6 198.6 203.5 208.8 214.9 222.5 232.0 241.4 248.1 253.4 258.0 263.7 269.0 275.1 283.2 292.6 301.2 306.9 312.9 318.6 324.3 330.3 336.3 342.0 347.8 355.5 361.2 367.0 374.7 381.7 386.9 393.7 401.8 409.0 416.5 423.1 430.0 437.9 445.3 451.0 455.5 461.8 468.5 474.1" y="651" fill="#000000" font-weight="bold" transform="scale(1.1119,1)">urn:oasis:names:tc:SAML:2.0:bindings:HTTP-Redirect</text>
<text x="463.2 467.9 474.6" y="651" fill="#0000ff" transform="scale(1.1500,1)">&quot;/&gt;</text>
<text x="76.4" y="665" fill="#0000ff" transform="scale(1.1500,1)">&lt;</text>
<text x="91.6 100.5 106.5 112.8 118.2 123.2 130.2 135.2 140.0 146.5 153.0 159.8 166.7 173.6 179.3 185.3 192.4 198.1 203.7 208.5 213.0 219.3" y="665" fill="#990000" transform="scale(1.0776,1)">md:SingleLogoutService</text>
<text x="230.4 236.9 243.3 249.7 255.4 259.1 264.0 270.9" y="665" fill="#990000" transform="scale(1.0745,1)">Location</text>
<text x="260.7 267.3" y="665" fill="#0000ff" transform="scale(1.1500,1)">=&quot;</text>
<text x="664.1" y="665" fill="#0000ff" transform="scale(1.1500,1)">&quot;</text>
<text x="103.7 109.1 114.1 121.2 126.2 131.3 138.4" y="680" fill="#990000" transform="scale(1.0714,1)">Binding</text>
<text x="136.5 143.1" y="680" fill="#0000ff" transform="scale(1.1500,1)">=&quot;</text>
<text x="155.8 162.4 169.1 175.2 181.2 188.6 195.4 200.4 205.4 210.7 216.9 224.4 234.0 243.6 250.3 255.6 260.4 266.0 271.4 277.5 285.7 295.2 303.9 309.7 315.7 321.5 327.2 333.3 339.3 345.1 350.9 358.7 364.5 370.3 378.1 385.1 390.4 397.2 405.4 412.6 420.2 426.9 433.5 442.2 450.7 458.2" y="680" fill="#000000" font-weight="bold" transform="scale(1.1020,1)">urn:oasis:names:tc:SAML:2.0:bindings:HTTP-POST</text>
<text x="444.9 449.7 456.3" y="680" fill="#0000ff" transform="scale(1.1500,1)">&quot;/&gt;</text>
<text x="76.4" y="695" fill="#0000ff" transform="scale(1.1500,1)">&lt;</text>
<text x="90.2 98.9 104.9 111.5 118.9 127.6 136.2 141.8 148.3 155.7 162.2 167.8 175.5 184.2 189.7" y="695" fill="#990000" transform="scale(1.0944,1)">md:NameIDFormat</text>
<text x="186.9" y="695" fill="#0000ff" transform="scale(1.1500,1)">&gt;</text>
<text x="198.3 204.8 211.2 217.2 223.0 230.3 236.9 241.8 246.6 251.8 257.8 265.2 274.6 283.9 290.4 295.6 300.2 305.8 311.0 317.0 325.0 334.2 342.7 348.3 354.2 359.8 365.4 371.3 377.3 384.7 394.1 403.4 408.7 414.3 420.7 425.5 431.3 437.6 446.0 455.4 461.4 466.0 471.9 479.2 485.3 491.0 495.9 500.7 506.2 512.2 519.5 525.8" y="695" fill="#000000" font-weight="bold" transform="scale(1.1304,1)">urn:oasis:names:tc:SAML:2.0:nameid-format:persistent</text>
<text x="523.5 530.2" y="695" fill="#0000ff" transform="scale(1.1500,1)">&lt;/</text>
<text x="565.0 573.7 579.7 586.2 593.7 602.4 611.0 616.6 623.1 630.5 637.0 642.6 650.3 659.0 664.5" y="695" fill="#990000" transform="scale(1.0944,1)">md:NameIDFormat</text>
<text x="638.7" y="695" fill="#0000ff" transform="scale(1.1500,1)">&gt;</text>
<text x="76.4" y="709" fill="#0000ff" transform="scale(1.1500,1)">&lt;</text>
<text x="92.3 101.3 107.4 113.8 119.1 124.2 131.3 136.3 141.2 148.4 153.7 158.8 165.9 173.8 181.8 189.2 196.4 202.1 207.8 212.6 217.1 223.5" y="709" fill="#990000" transform="scale(1.0688,1)">md:SingleSignOnService</text>
<text x="232.7 239.3 245.7 252.1 257.7 261.4 266.3 273.3" y="709" fill="#990000" transform="scale(1.0745,1)">Location</text>
<text x="262.9 269.5" y="709" fill="#0000ff" transform="scale(1.1500,1)">=&quot;</text>
<text x="665.9" y="709" fill="#0000ff" transform="scale(1.1500,1)">&quot;</text>
<text x="103.7 109.1 114.1 121.2 126.2 131.3 138.4" y="724" fill="#990000" transform="scale(1.0714,1)">Binding</text>
<text x="136.5 143.1" y="724" fill="#0000ff" transform="scale(1.1500,1)">=&quot;</text>
<text x="154.4 161.0 167.6 173.7 179.6 186.9 193.6 198.6 203.5 208.8 214.9 222.5 232.0 241.4 248.1 253.4 258.0 263.7 269.0 275.1 283.2 292.6 301.2 306.9 312.9 318.6 324.3 330.3 336.3 342.0 347.8 355.5 361.2 367.0 374.7 381.7 386.9 393.7 401.8 409.0 416.5 423.1 430.0 437.9 445.3 451.0 455.5 461.8 468.5 474.1" y="724" fill="#000000" font-weight="bold" transform="scale(1.1119,1)">urn:oasis:names:tc:SAML:2.0:bindings:HTTP-Redirect</text>
<text x="463.2 467.9 474.6" y="724" fill="#0000ff" transform="scale(1.1500,1)">&quot;/&gt;</text>
<text x="76.4" y="738" fill="#0000ff" transform="scale(1.1500,1)">&lt;</text>
<text x="92.3 101.3 107.4 113.8 119.1 124.2 131.3 136.3 141.2 148.4 153.7 158.8 165.9 173.8 181.8 189.2 196.4 202.1 207.8 212.6 217.1 223.5" y="738" fill="#990000" transform="scale(1.0688,1)">md:SingleSignOnService</text>
<text x="232.7 239.3 245.7 252.1 257.7 261.4 266.3 273.3" y="738" fill="#990000" transform="scale(1.0745,1)">Location</text>
<text x="262.9 269.5" y="738" fill="#0000ff" transform="scale(1.1500,1)">=&quot;</text>
<text x="665.9" y="738" fill="#0000ff" transform="scale(1.1500,1)">&quot;</text>
<text x="103.7 109.1 114.1 121.2 126.2 131.3 138.4" y="753" fill="#990000" transform="scale(1.0714,1)">Binding</text>
<text x="136.5 143.1" y="753" fill="#0000ff" transform="scale(1.1500,1)">=&quot;</text>
<text x="155.8 162.4 169.1 175.2 181.2 188.6 195.4 200.4 205.4 210.7 216.9 224.4 234.0 243.6 250.3 255.6 260.4 266.0 271.4 277.5 285.7 295.2 303.9 309.7 315.7 321.5 327.2 333.3 339.3 345.1 350.9 358.7 364.5 370.3 378.1 385.1 390.4 397.2 405.4 412.6 420.2 426.9 433.5 442.2 450.7 458.2" y="753" fill="#000000" font-weight="bold" transform="scale(1.1020,1)">urn:oasis:names:tc:SAML:2.0:bindings:HTTP-POST</text>
<text x="444.9 449.7 456.3" y="753" fill="#0000ff" transform="scale(1.1500,1)">&quot;/&gt;</text>
<text x="55.6 62.2" y="768" fill="#0000ff" transform="scale(1.1500,1)">&lt;/</text>
<text x="75.2 84.3 90.4 95.3 102.0 109.7 117.0 124.7 133.0 141.7 149.4 155.7 161.7 167.1 171.1 176.1 181.9 187.5 193.3" y="768" fill="#990000" transform="scale(1.0648,1)">md:IDPSSODescriptor</text>
<text x="185.5" y="768" fill="#0000ff" transform="scale(1.1500,1)">&gt;</text>
<text x="43.2" y="782" fill="#ff0000" transform="scale(1.1500,1)">-</text>
<text x="55.6" y="782" fill="#0000ff" transform="scale(1.1500,1)">&lt;</text>
<text x="68.1 76.8 82.7 89.5 96.1 101.9 108.7 115.5 120.5 124.8 130.9 136.5 140.1 144.9 151.7" y="782" fill="#990000" transform="scale(1.0972,1)">md:Organization</text>
<text x="152.3" y="782" fill="#0000ff" transform="scale(1.1500,1)">&gt;</text>
</svg>
</div></div>
<!-- annotation -->
<div class="abs" style="left:71px;top:626px;width:698px;height:16px;border:4px solid rgba(60,60,60,.22);border-radius:4px;filter:blur(1.6px)"></div><div class="abs" style="left:67px;top:623px;width:697px;height:16px;border:2px solid #e2423b"></div>
<!-- scrollbars -->
<div class="abs" style="left:951px;top:75px;width:26px;height:736px;background:#eeedf6"></div>
<div class="abs" style="left:11px;top:785px;width:966px;height:26px;background:#eeedf6"></div>
<div class="abs" style="left:952px;top:109px;width:24px;height:565px;background:#cdc6ce"></div>
<div class="abs" style="left:45px;top:786px;width:48px;height:24px;background:#cdc6ce"></div>
<svg class="abs" style="left:0;top:0" width="988" height="822" viewBox="0 0 988 822">
 <path d="M964 88.8 L973.8 98.3 L973.8 103.9 L964 94.8 L954.2 103.9 L954.2 98.3 Z" fill="#616161"/>
 <path d="M964 771 L973.8 761.5 L973.8 755.9 L964 765 L954.2 755.9 L954.2 761.5 Z" fill="#616161"/>
 <path d="M40.1 789.1 L33.6 789.1 L24.7 798.4 L33.6 807.7 L40.1 807.7 L30.9 798.4 Z" fill="#616161"/>
 <path d="M921.5 789.1 L928 789.1 L937.3 798.4 L928 807.7 L921.5 807.7 L930.7 798.4 Z" fill="#616161"/>
</svg>
</body></html>
